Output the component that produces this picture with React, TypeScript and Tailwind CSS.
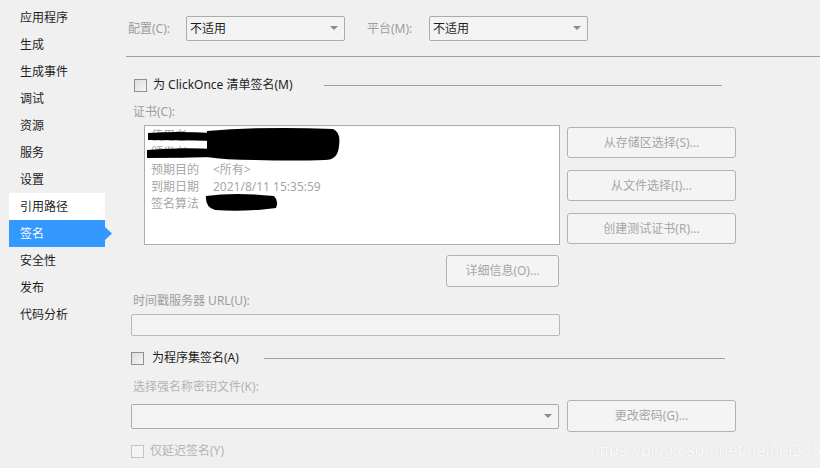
import React from 'react';

const navItems = ['应用程序', '生成', '生成事件', '调试', '资源', '服务', '设置', '引用路径', '签名', '安全性', '发布', '代码分析'];

function Checkbox({ disabled }: { disabled?: boolean }) {
  return (
    <span
      className={
        'inline-block w-[13px] h-[13px] shrink-0 border ' +
        (disabled ? 'border-[#c4c4c4] bg-[#f4f4f4]' : 'border-[#8f8f8f] bg-gradient-to-br from-[#dcdcdc] to-[#f6f6f6]')
      }
    />
  );
}

function Select({ value, width }: { value?: string; width: string }) {
  return (
    <div className={`${width} h-[25px] flex items-center justify-between border border-[#acacac] rounded-[2px] bg-[#f3f3f3] pl-[3px] pr-[6px]`}>
      <span className="text-[#1e1e1e]">{value}</span>
      <svg width="8" height="5" viewBox="0 0 8 5">
        <path d="M0 0 H8 L4 4 Z" fill="#8a8a8a" />
      </svg>
    </div>
  );
}

function Button({ label, className }: { label: string; className: string }) {
  return (
    <div className={`${className} flex items-center justify-center border border-[#b2b2b2] rounded-[3px] bg-[#f4f4f4] text-[#a6a6a6]`}>
      {label}
    </div>
  );
}

export default function App() {
  return (
    <div className="relative w-[820px] h-[468px] overflow-hidden bg-[#f0f0f0] flex text-[12px] leading-[16px] font-['Noto_Sans','Noto_Sans_CJK_SC',sans-serif] text-[#1e1e1e]">
      {/* left navigation */}
      <div className="w-[126px] shrink-0 pt-[4px]">
        {navItems.map((item) => {
          const selected = item === '签名';
          const hover = item === '引用路径';
          return (
            <div key={item} className="relative ml-[9px] w-[96px] h-[27px] flex items-center pl-[11px]">
              <div className={'absolute inset-0 ' + (selected ? 'bg-[#3399ff]' : hover ? 'bg-white' : '')} />
              <span className={'relative ' + (selected ? 'text-white' : 'text-[#1e1e1e]')}>{item}</span>
              {selected && (
                <svg className="absolute left-[96px] top-[7px]" width="7" height="13" viewBox="0 0 7 13">
                  <path d="M0 0 L7 6.5 L0 13 Z" fill="#3399ff" />
                </svg>
              )}
            </div>
          );
        })}
      </div>

      {/* main settings */}
      <div className="flex-1 flex flex-col">
        <div className="mt-[16px] h-[25px] flex items-center">
          <span className="ml-[2px] w-[58px] text-[#9d9d9d]">配置(C):</span>
          <Select value="不适用" width="w-[159px]" />
          <span className="ml-[22px] w-[62px] text-[#9d9d9d]">平台(M):</span>
          <Select value="不适用" width="w-[159px]" />
        </div>

        <div className="mt-[15px] h-px bg-[#a0a0a0]" />

        <div className="mt-[20px] h-[16px] w-[596px] flex items-center justify-between pl-[8px]">
          <div className="flex items-center">
            <Checkbox />
            <span className="ml-[6px]">为 ClickOnce 清单签名(M)</span>
          </div>
          <div className="w-[398px] h-px bg-[#a0a0a0]" />
        </div>

        <div className="mt-[11px] pl-[7px] text-[#9d9d9d]">证书(C):</div>

        <div className="mt-[5px] flex">
          <div className="relative ml-[18px] w-[416px] h-[120px] border border-[#acacac] bg-white pt-[1px] pl-[6px] text-[#a6a6a6] leading-[17px]">
            {[
              ['使用者', ''],
              ['颁发者', ''],
              ['预期目的', '<所有>'],
              ['到期日期', '2021/8/11 15:35:59'],
              ['签名算法', ''],
            ].map(([k, v]) => (
              <div key={k} className="flex">
                <span className="w-[62px]">{k}</span>
                <span>{v}</span>
              </div>
            ))}
            <svg className="absolute left-0 top-0" width="416" height="120" viewBox="0 0 416 120">
              <path d="M3 7 Q30 5 68 7 L68 15 Q30 14 3 14 Z" fill="#000" />
              <path d="M2 24 Q35 21 70 23 L70 31 Q35 32 2 32 Z" fill="#000" />
              <path d="M62 5 Q120 0 188 3 Q196 6 194 20 Q193 34 180 34 Q150 35 110 34 Q80 34 62 31 Z" fill="#000" />
              <path d="M61 70 Q90 66 129 70 Q134 75 131 82 Q100 86 70 84 Q60 81 61 70 Z" fill="#000" />
            </svg>
          </div>
          <div className="ml-[7px] pt-[2px] flex flex-col gap-[12px]">
            <Button label="从存储区选择(S)..." className="w-[169px] h-[31px]" />
            <Button label="从文件选择(I)..." className="w-[169px] h-[31px]" />
            <Button label="创建测试证书(R)..." className="w-[169px] h-[31px]" />
          </div>
        </div>

        <div className="mt-[10px] pl-[320px]">
          <Button label="详细信息(O)..." className="w-[113px] h-[32px]" />
        </div>

        <div className="mt-[6px] pl-[7px] text-[#9d9d9d]">时间戳服务器 URL(U):</div>
        <div className="mt-[5px] ml-[5px] w-[429px] h-[22px] border border-[#b8b8b8] rounded-[2px] bg-[#f3f3f3]" />

        <div className="mt-[14px] h-[16px] w-[599px] flex items-center justify-between pl-[5px]">
          <div className="flex items-center">
            <Checkbox />
            <span className="ml-[8px]">为程序集签名(A)</span>
          </div>
          <div className="w-[461px] h-px bg-[#a0a0a0]" />
        </div>

        <div className="mt-[13px] pl-[7px] text-[#b4b4b4]">选择强名称密钥文件(K):</div>
        <div className="mt-[5px] ml-[5px] flex items-center">
          <Select width="w-[428px]" />
          <Button label="更改密码(G)..." className="ml-[8px] w-[169px] h-[32px]" />
        </div>

        <div className="mt-[11px] h-[16px] pl-[5px] flex items-center">
          <Checkbox disabled />
          <span className="ml-[6px] text-[#b4b4b4]">仅延迟签名(Y)</span>
        </div>
      </div>

      <div className="absolute left-[590px] top-[441px] text-[17px] leading-[20px] font-['Liberation_Sans',sans-serif] text-[#fafafa] [text-shadow:0_0_1px_#cfcfcf]">
        https://blog.csdn.net/heihei233
      </div>
    </div>
  );
}
